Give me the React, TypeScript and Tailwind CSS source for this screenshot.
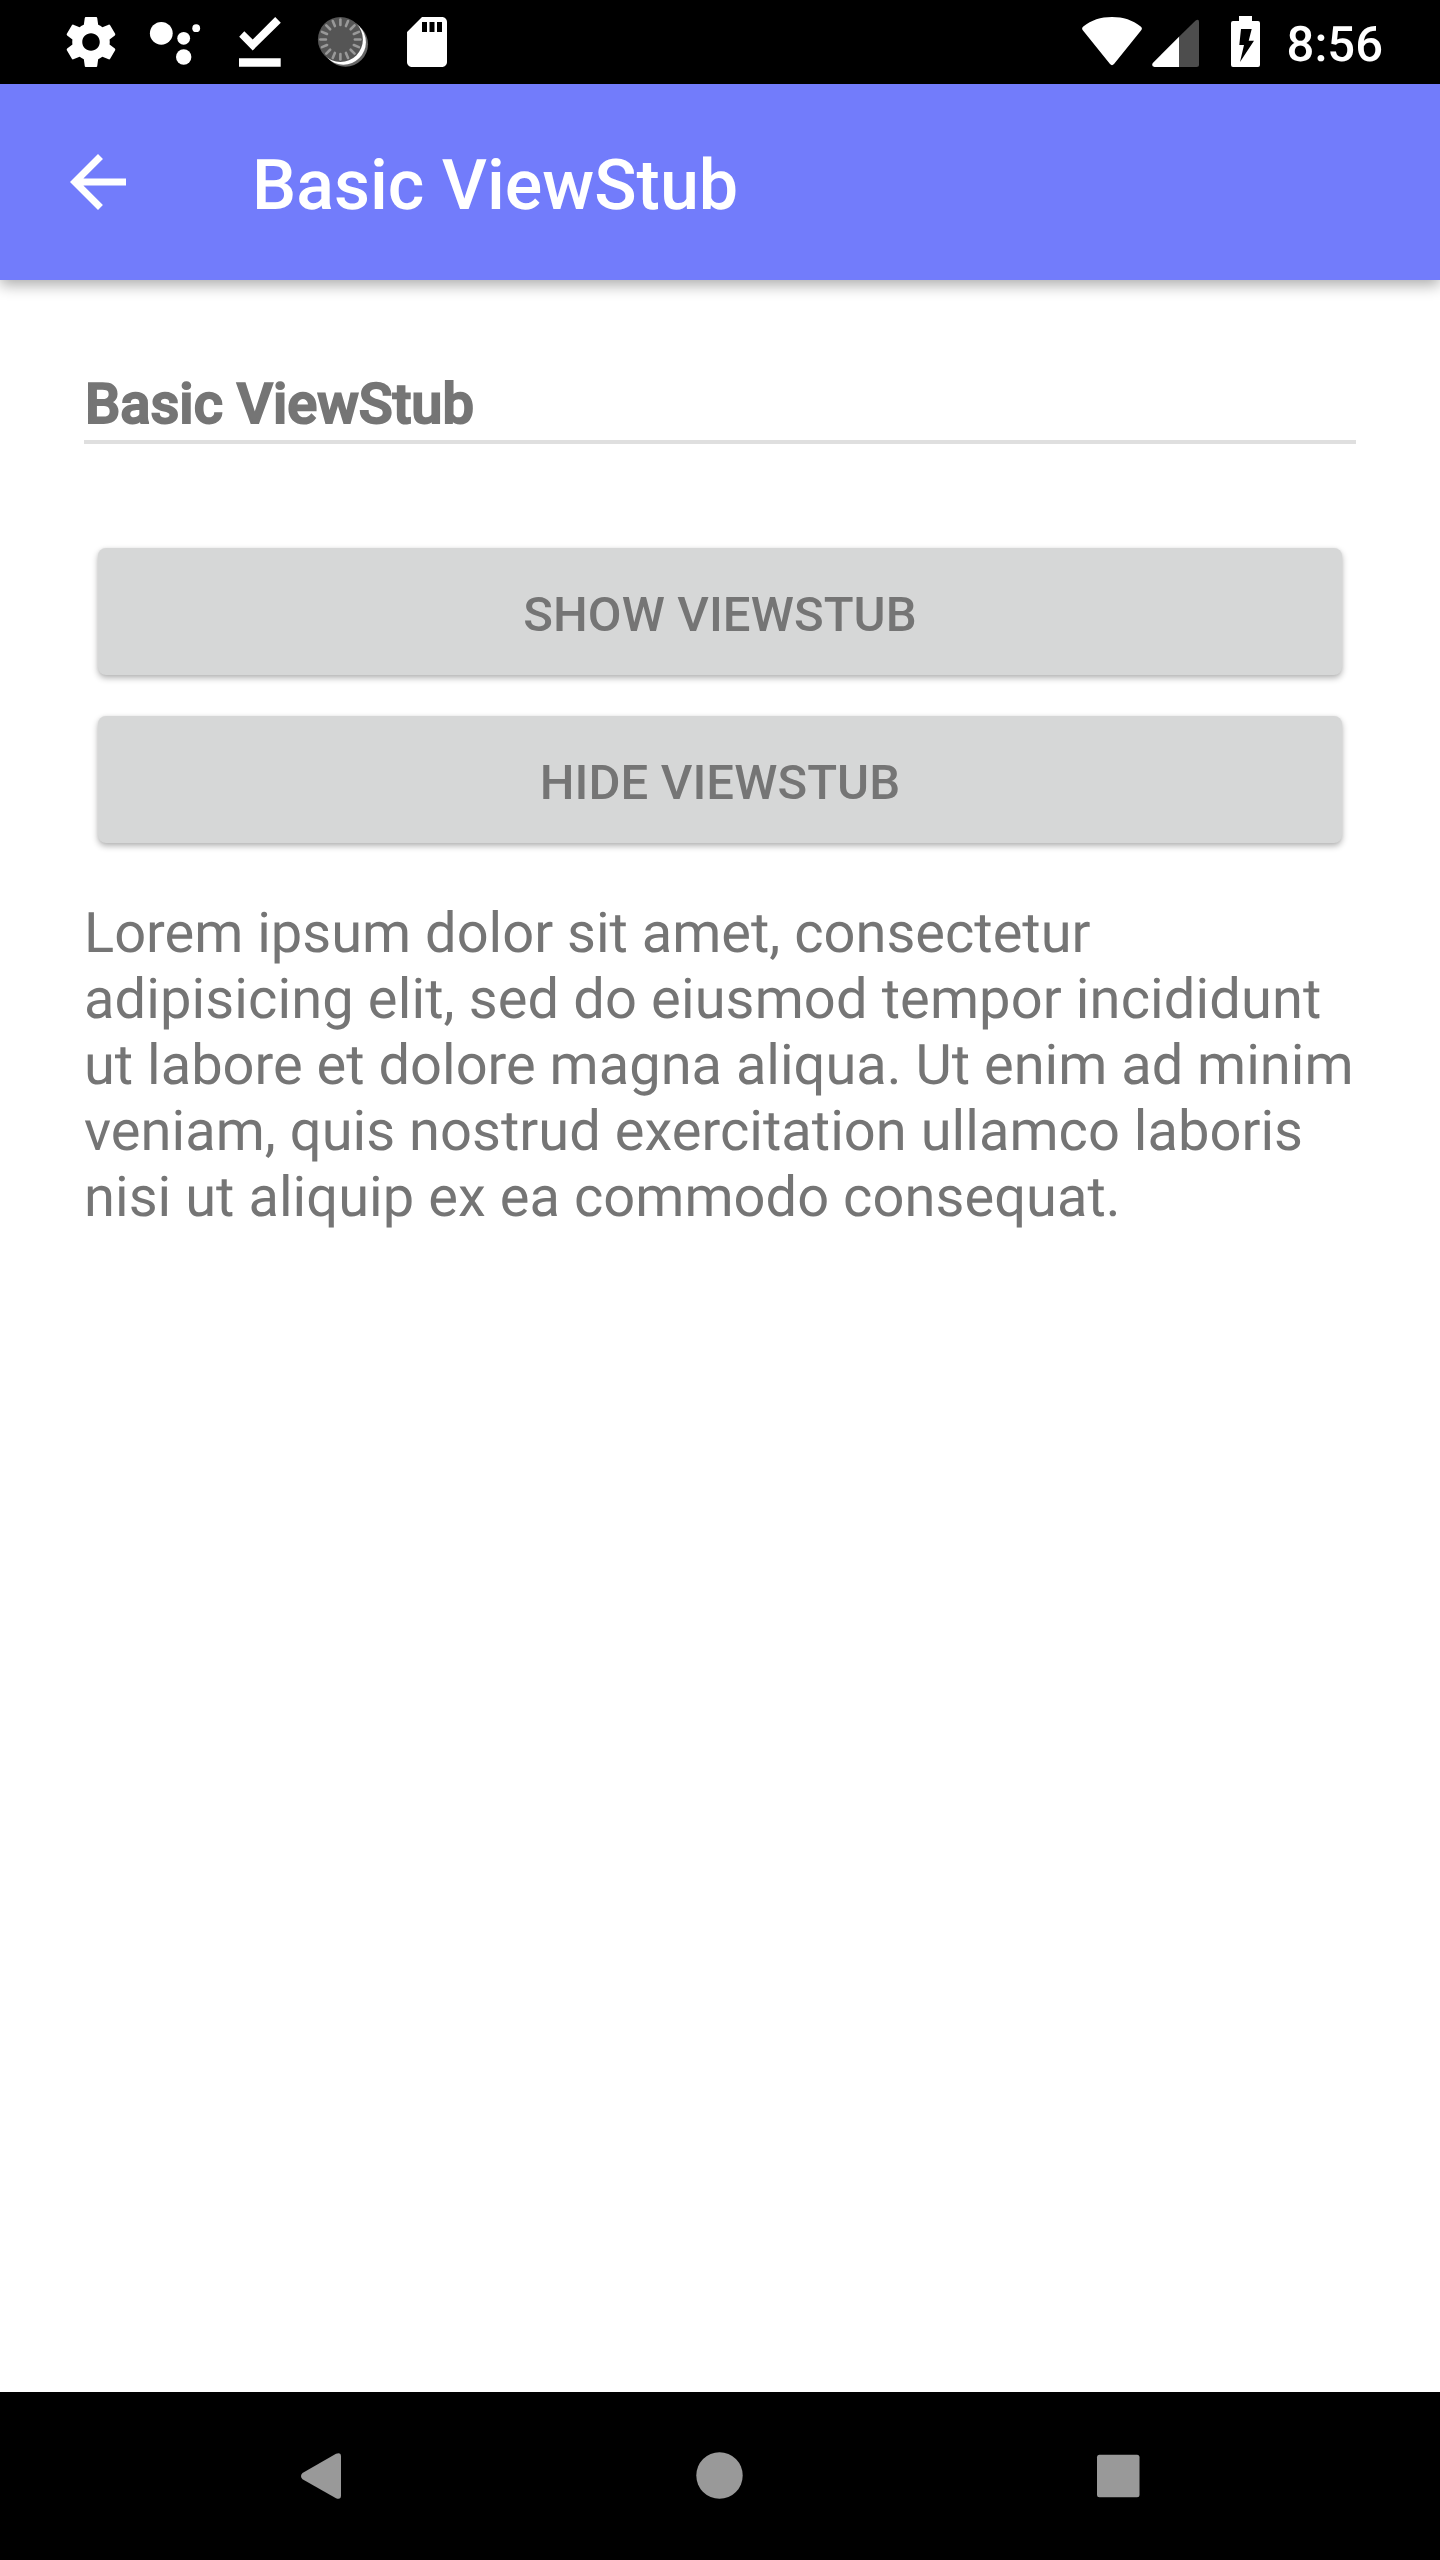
import React from "react";

const spokes = Array.from({ length: 16 }, (_, i) => i * 22.5);

function StatusBar() {
  return (
    <div className="flex h-[84px] items-center justify-between bg-black pl-[61px] pr-[57px] text-white">
      <div className="flex gap-6">
        <svg className="size-[60px]" viewBox="0 0 24 24" fill="currentColor">
          <path d="M19.43 12.98c.04-.32.07-.64.07-.98s-.03-.66-.07-.98l2.11-1.65c.19-.15.24-.42.12-.64l-2-3.46c-.12-.22-.39-.3-.61-.22l-2.49 1c-.52-.4-1.08-.73-1.69-.98l-.38-2.65C14.46 2.18 14.25 2 14 2h-4c-.25 0-.46.18-.49.42l-.38 2.65c-.61.25-1.17.59-1.69.98l-2.49-1c-.23-.09-.49 0-.61.22l-2 3.46c-.13.22-.07.49.12.64l2.11 1.65c-.04.32-.07.65-.07.98s.03.66.07.98l-2.11 1.65c-.19.15-.24.42-.12.64l2 3.46c.12.22.39.3.61.22l2.49-1c.52.4 1.08.73 1.69.98l.38 2.65c.03.24.24.42.49.42h4c.25 0 .46-.18.49-.42l.38-2.65c.61-.25 1.17-.59 1.69-.98l2.49 1c.23.09.49 0 .61-.22l2-3.46c.12-.22.07-.49-.12-.64l-2.11-1.65zM12 15.5c-1.93 0-3.5-1.57-3.5-3.5s1.57-3.5 3.5-3.5 3.5 1.57 3.5 3.5-1.57 3.5-3.5 3.5z" />
        </svg>
        <svg className="size-[60px]" viewBox="0 0 60 60" fill="currentColor">
          <circle cx="16.3" cy="21.3" r="11.4" />
          <circle cx="38.7" cy="26.3" r="6.4" />
          <circle cx="51.2" cy="16.2" r="3.9" />
          <circle cx="38.7" cy="45" r="7.7" />
        </svg>
        <svg className="size-[60px]" viewBox="0 0 60 60" fill="currentColor">
          <path d="M10.2 24.8L15.3 19.2L23.7 27.6L46.2 5L51.8 10.8L23.7 38.4Z" />
          <path d="M10 46.3H51.7V54.7H10Z" />
        </svg>
        <svg className="size-[60px]" viewBox="0 0 60 60">
          <circle cx="32.5" cy="32.2" r="22.5" fill="#666" />
          <circle cx="30.4" cy="30.2" r="22.5" fill="#fff" />
          <circle cx="27.4" cy="27.5" r="22.5" fill="#555" />
          {spokes.map((angle) => (
            <path
              key={angle}
              d="M27.4 7.5V13"
              stroke="#999"
              strokeWidth="2.6"
              strokeLinecap="round"
              transform={`rotate(${angle} 27.4 27.5)`}
            />
          ))}
        </svg>
        <svg className="size-[60px]" viewBox="0 0 24 24" fill="currentColor">
          <path d="M18 2h-8L4.02 8 4 20c0 1.1.9 2 2 2h12c1.1 0 2-.9 2-2V4c0-1.1-.9-2-2-2zm-6 6h-2V4h2v4zm3 0h-2V4h2v4zm3 0h-2V4h2v4z" />
        </svg>
      </div>
      <div className="flex items-center">
        <svg className="h-[60px] w-[60px]" viewBox="0 0 60 60" fill="currentColor">
          <path d="M1 18.5C-.3 17-.2 15.500 1.300 14.500C9.500 8 18.500 5 30 5S50.500 8 58.700 14.500C60.200 15.500 60.300 17 59 18.500L32 52Q30 54.300 28 52Z" />
        </svg>
        <svg className="ml-[10px] h-[60px] w-[47px]" viewBox="0 0 47 60">
          <path d="M27 24.700L43.400 8.700Q47 6.500 47 10V52.500Q47 55 44.500 55H27Z" fill="#4d4d4d" />
          <path d="M27 24.700V55H2.500Q-1 54.500 .8 51Z" fill="#fff" />
        </svg>
        <svg className="ml-8 h-[60px] w-[29px]" viewBox="0 0 29 60" fill="currentColor">
          <path
            fillRule="evenodd"
            d="M8 4H21V9H27Q29 9 29 11V53Q29 55 27 55H2Q0 55 0 53V11Q0 9 2 9H8ZM10 17L8.300 33H13L9 50L23 28.700H17.700L20.700 17Z"
          />
        </svg>
        <span className="ml-[27px] pt-[5px] text-[49px] leading-[60px] font-medium">8:56</span>
      </div>
    </div>
  );
}

function AppBar() {
  return (
    <header className="relative flex h-[196px] items-center bg-[#727cfb] pl-14 text-white shadow-[0_5px_14px_rgba(0,0,0,0.33)]">
      <svg className="size-[84px]" viewBox="0 0 24 24" fill="currentColor">
        <path d="M20 11H7.830l5.590-5.590L12 4l-8 8 8 8 1.410-1.410L7.830 13H20v-2z" />
      </svg>
      <h1 className="mt-[7px] ml-[112px] text-[70px] leading-[82px] font-medium">Basic ViewStub</h1>
    </header>
  );
}

function StubButton({ children }: { children: React.ReactNode }) {
  return (
    <button className="h-[127px] w-full rounded-[8px] bg-[#d6d7d7] pt-[5px] text-center text-[49px] leading-[57px] font-medium tracking-[0.1px] text-[#757575] shadow-[0_3px_6px_rgba(0,0,0,0.3),0_0_3px_rgba(0,0,0,0.05)]">
      {children}
    </button>
  );
}

function NavBar() {
  return (
    <nav className="flex h-[168px] items-center justify-between bg-black px-[286px] text-[#999]">
      <svg className="h-[70px] w-[70px]" viewBox="0 0 70 70" fill="currentColor">
        <path d="M16.500 32L50 12.800Q55 11 55 15.500V54.500Q55 59 50 57.200L16.500 38.300Q13.500 35 16.500 32Z" />
      </svg>
      <svg className="h-[70px] w-[70px]" viewBox="0 0 70 70" fill="currentColor">
        <circle cx="34.500" cy="34.500" r="23.200" />
      </svg>
      <svg className="h-[70px] w-[70px]" viewBox="0 0 70 70" fill="currentColor">
        <rect x="13" y="13.700" width="42.500" height="42.500" rx="2.500" />
      </svg>
    </nav>
  );
}

export default function App() {
  return (
    <div className="flex h-[2560px] w-[1440px] flex-col bg-white font-['Roboto',sans-serif] [text-rendering:geometricPrecision]">
      <StatusBar />
      <AppBar />
      <main className="flex flex-1 flex-col px-[84px] pt-[91px] text-[#757575]">
        <h2 className="h-[73px] border-b-4 border-[#dfdfdf] pl-px text-[56px] leading-[66px] font-medium [-webkit-text-stroke:2px_#757575]">
          Basic ViewStub
        </h2>
        <div className="mt-[104px] flex flex-col gap-[41px] px-[14px]">
          <StubButton>SHOW VIEWSTUB</StubButton>
          <StubButton>HIDE VIEWSTUB</StubButton>
        </div>
        <p className="mt-[57px] text-[56px] leading-[66px] whitespace-nowrap">
          Lorem ipsum dolor sit amet, consectetur
          <br />
          <span className="tracking-[0.12px]">adipisicing elit, sed do eiusmod tempor incididunt</span>
          <br />
          ut labore et dolore magna aliqua. Ut enim ad minim
          <br />
          <span className="tracking-[0.035px]">veniam, quis nostrud exercitation ullamco laboris</span>
          <br />
          <span className="tracking-[0.05px]">nisi ut aliquip ex ea commodo consequat.</span>
        </p>
      </main>
      <NavBar />
    </div>
  );
}
